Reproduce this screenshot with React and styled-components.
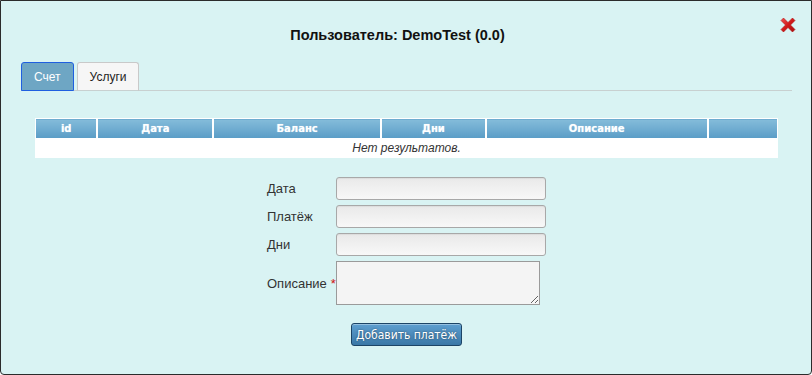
import React from "react";
import styled, { createGlobalStyle } from "styled-components";

const GlobalStyle = createGlobalStyle`
  html, body {
    margin: 0;
    padding: 0;
    background: #fff;
  }
  body {
    font-family: "Liberation Sans", Arial, sans-serif;
  }
`;

// окно диалога
const Dialog = styled.div`
  box-sizing: border-box;
  width: 812px;
  height: 375px;
  background: #d9f3f3;
  border: 1px solid #2b2b2b;
  border-radius: 0 0 4px 4px;
  position: relative;
  display: flex;
  flex-direction: column;
`;

const Header = styled.div`
  display: flex;
  justify-content: center;
  padding: 25px 17px 0 0;
  height: 36px;
  box-sizing: content-box;
`;

const Title = styled.h1`
  margin: 0;
  font-size: 14.5px;
  font-weight: bold;
  color: #111;
  line-height: 18px;
`;

const CloseButton = styled.button`
  position: absolute;
  top: 15px;
  right: 14px;
  width: 18px;
  height: 18px;
  padding: 0;
  border: 0;
  background: none;
  cursor: pointer;
`;

const TabBar = styled.div`
  display: flex;
  gap: 3px;
  margin: 0 19px 0 20px;
  border-bottom: 1px solid #c8d0d0;
`;

const Tab = styled.button`
  box-sizing: border-box;
  height: 29px;
  padding: 0 12px;
  margin-bottom: -1px;
  font-family: "Liberation Sans", Arial, sans-serif;
  font-size: 12px;
  border-radius: 3px 3px 0 0;
  border: 1px solid ${(p) => (p.active ? "#1f5fe0" : "#c9c9c9")};
  border-bottom: ${(p) => (p.active ? "1px solid #1f5fe0" : "1px solid #c8d0d0")};
  background: ${(p) => (p.active ? "#6ea6c4" : "#f6f6f6")};
  color: ${(p) => (p.active ? "#fff" : "#222")};
`;

const TableWrap = styled.div`
  margin: 27px 34px 0 34px;
`;

const Table = styled.table`
  width: 743px;
  border-collapse: collapse;
  background: #fff;
  border: 1px solid #fff;
`;

const Th = styled.th`
  height: 19px;
  padding: 0;
  font-family: "DejaVu Sans", Verdana, sans-serif;
  font-size: 10px;
  font-weight: bold;
  color: #fff;
  text-shadow: 0 0 1px rgba(255, 255, 255, 0.6);
  background: linear-gradient(#84bcda, #5a9cc6);
  border-left: 2px solid #fff;
  &:first-child {
    border-left: 0;
  }
`;

const EmptyCell = styled.td`
  height: 19px;
  padding: 0;
  text-align: center;
  font-family: "Liberation Sans", Arial, sans-serif;
  font-size: 12px;
  font-style: italic;
  color: #333;
`;

const Form = styled.form`
  display: grid;
  grid-template-columns: 69px 210px;
  row-gap: 5px;
  justify-content: center;
  align-items: center;
  margin-top: 19px;
  margin-left: 1px;
`;

const Label = styled.label`
  font-family: "Liberation Sans", Arial, sans-serif;
  font-size: 13px;
  color: #333;
`;

const Required = styled.span`
  color: #d01010;
  margin-left: 4px;
`;

const Input = styled.input`
  box-sizing: border-box;
  width: 210px;
  height: 23px;
  border: 1px solid #a8a8a8;
  border-radius: 3px;
  background: linear-gradient(#e9e9e9, #f8f8f8);
  box-shadow: inset 0 1px 1px rgba(0, 0, 0, 0.06);
`;

const TextArea = styled.textarea`
  box-sizing: border-box;
  width: 204px;
  height: 44px;
  border: 1px solid #9a9a9a;
  background: #f4f4f4;
  resize: both;
  margin: 0;
`;

const Actions = styled.div`
  display: flex;
  justify-content: center;
  margin-top: 18px;
  margin-left: 1px;
`;

const SubmitButton = styled.button`
  box-sizing: border-box;
  height: 23px;
  padding: 0 4px;
  font-family: "DejaVu Sans Condensed", "DejaVu Sans", sans-serif;
  font-size: 12px;
  color: #fff;
  text-shadow: 0 0 2px rgba(0, 0, 0, 0.5);
  background: linear-gradient(#5e9fd0, #3a77a6);
  border: 1px solid #1c4466;
  border-radius: 3px;
  box-shadow: inset 0 1px 0 rgba(255, 255, 255, 0.35);
`;

const CloseIcon = () => (
  <svg width="18" height="18" viewBox="0 0 18 18">
    <defs>
      <linearGradient id="xg" x1="0" y1="0" x2="1" y2="1">
        <stop offset="0" stopColor="#f25050" />
        <stop offset="0.5" stopColor="#d01818" />
        <stop offset="1" stopColor="#a80e0e" />
      </linearGradient>
    </defs>
    <path
      d="M2 4.5 L4.5 2 L9 6.5 L13.5 2 L16 4.5 L11.5 9 L16 13.5 L13.5 16 L9 11.5 L4.5 16 L2 13.5 L6.5 9 Z"
      fill="url(#xg)"
      stroke="#b01212"
      strokeWidth="0.6"
      strokeLinejoin="round"
    />
  </svg>
);

const columns = [
  { title: "id", width: 62 },
  { title: "Дата", width: 116 },
  { title: "Баланс", width: 168 },
  { title: "Дни", width: 105 },
  { title: "Описание", width: 222 },
  { title: "", width: 70 },
];

export default function App() {
  return (
    <>
      <GlobalStyle />
      <Dialog>
        <Header>
          <Title>Пользователь: DemoTest (0.0)</Title>
        </Header>
        <CloseButton aria-label="Закрыть">
          <CloseIcon />
        </CloseButton>

        <TabBar>
          <Tab active>Счет</Tab>
          <Tab>Услуги</Tab>
        </TabBar>

        <TableWrap>
          <Table>
            <colgroup>
              {columns.map((c, i) => (
                <col key={i} style={{ width: c.width }} />
              ))}
            </colgroup>
            <thead>
              <tr>
                {columns.map((c, i) => (
                  <Th key={i}>{c.title}</Th>
                ))}
              </tr>
            </thead>
            <tbody>
              <tr>
                <EmptyCell colSpan={6}>Нет результатов.</EmptyCell>
              </tr>
            </tbody>
          </Table>
        </TableWrap>

        <Form onSubmit={(e) => e.preventDefault()}>
          <Label>Дата</Label>
          <Input />
          <Label>Платёж</Label>
          <Input />
          <Label>Дни</Label>
          <Input />
          <Label>
            Описание<Required>*</Required>
          </Label>
          <TextArea />
        </Form>

        <Actions>
          <SubmitButton>Добавить платёж</SubmitButton>
        </Actions>
      </Dialog>
    </>
  );
}
